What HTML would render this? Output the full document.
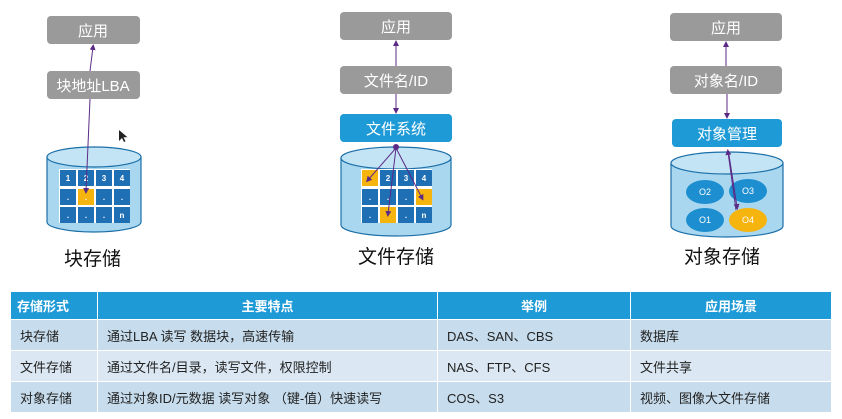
<!DOCTYPE html>
<html><head><meta charset="utf-8"><style>
body{margin:0;width:842px;height:419px;background:#fff;overflow:hidden;position:relative;font-family:"Liberation Sans","Noto Sans CJK SC",sans-serif}
svg{position:absolute;left:0;top:0}
table{position:absolute;left:10px;top:291px;width:822px;border-collapse:collapse;font-size:13px;color:#222;table-layout:fixed}
td,th{border:1px solid #fff;padding:0 0 0 9px;text-align:left}
th{background:#1e9ad6;color:#fff;height:27px;font-weight:bold;text-align:center;padding:0}
th:first-child{text-align:left;padding-left:6px}
tr.a td{background:#c7dcec;height:30px}
tr.b td{background:#dbe8f3;height:30px}
</style></head><body>
<svg width="842" height="290" font-family="Liberation Sans,Noto Sans CJK SC,sans-serif">
<defs><marker id="ar" markerWidth="6" markerHeight="6" refX="3" refY="3" orient="auto"><path d="M0,0L6,3L0,6z" fill="#5b2a86"/></marker></defs>
<g font-size="15" fill="#fff" text-anchor="middle">
<rect x="47" y="16" width="93" height="28" rx="4" fill="#9a9a9a"/><text x="93" y="36">应用</text>
<rect x="47" y="71" width="93" height="28" rx="4" fill="#9a9a9a"/><text x="93" y="91">块地址LBA</text>
<rect x="340" y="12" width="112" height="28" rx="4" fill="#9a9a9a"/><text x="396" y="32">应用</text>
<rect x="340" y="66" width="112" height="28" rx="4" fill="#9a9a9a"/><text x="396" y="86">文件名/ID</text>
<rect x="340" y="114" width="112" height="28" rx="4" fill="#1e9ad6"/><text x="396" y="134">文件系统</text>
<rect x="670" y="13" width="112" height="28" rx="4" fill="#9a9a9a"/><text x="726" y="33">应用</text>
<rect x="670" y="66" width="112" height="28" rx="4" fill="#9a9a9a"/><text x="726" y="86">对象名/ID</text>
<rect x="672" y="119" width="110" height="28" rx="4" fill="#1e9ad6"/><text x="727" y="139">对象管理</text>
</g>
<g stroke="#1b6fa8" stroke-width="1.2">
<path d="M47,157V222A47,10 0 0 0 141,222V157" fill="#a9d7ef"/><ellipse cx="94" cy="157" rx="47" ry="10" fill="#c3e4f5"/>
<path d="M341,158V225A55,11 0 0 0 451,225V158" fill="#a9d7ef"/><ellipse cx="396" cy="158" rx="55" ry="11" fill="#c3e4f5"/>
<path d="M671,163V226A56,11 0 0 0 783,226V163" fill="#a9d7ef"/><ellipse cx="727" cy="163" rx="56" ry="11" fill="#c3e4f5"/>
</g>
<g font-size="8" font-weight="bold" fill="#fff" text-anchor="middle">
<rect x="59" y="169" width="71" height="54" fill="#fff"/>
<rect x="60" y="170" width="16" height="16" fill="#1f6fb5"/><text x="68" y="181">1</text>
<rect x="78" y="170" width="16" height="16" fill="#1f6fb5"/><text x="86" y="181">2</text>
<rect x="96" y="170" width="16" height="16" fill="#1f6fb5"/><text x="104" y="181">3</text>
<rect x="114" y="170" width="16" height="16" fill="#1f6fb5"/><text x="122" y="181">4</text>
<rect x="60" y="189" width="16" height="16" fill="#1f6fb5"/><rect x="78" y="189" width="16" height="16" fill="#f6b40e"/><rect x="96" y="189" width="16" height="16" fill="#1f6fb5"/><rect x="114" y="189" width="16" height="16" fill="#1f6fb5"/>
<rect x="60" y="207" width="16" height="16" fill="#1f6fb5"/><rect x="78" y="207" width="16" height="16" fill="#1f6fb5"/><rect x="96" y="207" width="16" height="16" fill="#1f6fb5"/><rect x="114" y="207" width="16" height="16" fill="#1f6fb5"/><text x="122" y="218">n</text>
<text x="68" y="200">.</text><text x="86" y="200">.</text><text x="104" y="200">.</text><text x="122" y="200">.</text><text x="68" y="218">.</text><text x="86" y="218">.</text><text x="104" y="218">.</text>
<rect x="361" y="169" width="71" height="54" fill="#fff"/>
<rect x="362" y="170" width="16" height="16" fill="#f6b40e"/>
<rect x="380" y="170" width="16" height="16" fill="#1f6fb5"/><text x="388" y="181">2</text>
<rect x="398" y="170" width="16" height="16" fill="#1f6fb5"/><text x="406" y="181">3</text>
<rect x="416" y="170" width="16" height="16" fill="#1f6fb5"/><text x="424" y="181">4</text>
<rect x="362" y="189" width="16" height="16" fill="#1f6fb5"/><rect x="380" y="189" width="16" height="16" fill="#1f6fb5"/><rect x="398" y="189" width="16" height="16" fill="#1f6fb5"/><rect x="416" y="189" width="16" height="16" fill="#f6b40e"/>
<rect x="362" y="207" width="16" height="16" fill="#1f6fb5"/><rect x="380" y="207" width="16" height="16" fill="#f6b40e"/><rect x="398" y="207" width="16" height="16" fill="#1f6fb5"/><rect x="416" y="207" width="16" height="16" fill="#1f6fb5"/><text x="424" y="218">n</text>
<text x="370" y="200">.</text><text x="388" y="200">.</text><text x="406" y="200">.</text><text x="370" y="218">.</text><text x="406" y="218">.</text>
</g>
<g font-size="9" fill="#fff" text-anchor="middle">
<ellipse cx="705" cy="192" rx="19" ry="12" fill="#1d8fd0"/><text x="705" y="195">O2</text>
<ellipse cx="748" cy="191" rx="19" ry="12" fill="#1d8fd0"/><text x="748" y="194">O3</text>
<ellipse cx="705" cy="220" rx="19" ry="12" fill="#1d8fd0"/><text x="705" y="223">O1</text>
<ellipse cx="748" cy="220" rx="19" ry="12" fill="#f6b40e"/><text x="748" y="223">O4</text>
</g>
<g stroke="#5b2a86" stroke-width="1" fill="none">
<line x1="90" y1="71" x2="93" y2="47" marker-end="url(#ar)"/>
<line x1="90" y1="99" x2="86" y2="191" marker-end="url(#ar)"/>
<line x1="396" y1="66" x2="396" y2="43" marker-end="url(#ar)"/>
<line x1="396" y1="94" x2="396" y2="111" marker-end="url(#ar)"/>
<line x1="396" y1="148" x2="368" y2="180" marker-end="url(#ar)"/>
<line x1="396" y1="148" x2="388" y2="214" marker-end="url(#ar)"/>
<line x1="396" y1="148" x2="422" y2="198" marker-end="url(#ar)"/>
<line x1="726" y1="66" x2="726" y2="44" marker-end="url(#ar)"/>
<line x1="727" y1="94" x2="727" y2="116" marker-end="url(#ar)"/>
<line x1="736" y1="210" x2="728" y2="152" marker-end="url(#ar)"/>
<line x1="729" y1="155" x2="737" y2="207" marker-end="url(#ar)"/>
</g>
<circle cx="396" cy="147" r="3" fill="#5b2a86"/>
<g font-size="19" fill="#111">
<text x="64" y="265">块存储</text>
<text x="358" y="263">文件存储</text>
<text x="684" y="263">对象存储</text>
</g>
<path d="M119,130l0,11l3,-3l2,4l1.5,-.8l-2,-4l4,0z" fill="#222"/>
</svg>
<table>
<colgroup><col style="width:87px"><col style="width:340px"><col style="width:193px"><col></colgroup>
<tr><th>存储形式</th><th>主要特点</th><th>举例</th><th>应用场景</th></tr>
<tr class="a"><td>块存储</td><td>通过LBA 读写 数据块，高速传输</td><td>DAS、SAN、CBS</td><td>数据库</td></tr>
<tr class="b"><td>文件存储</td><td>通过文件名/目录，读写文件，权限控制</td><td>NAS、FTP、CFS</td><td>文件共享</td></tr>
<tr class="a"><td>对象存储</td><td>通过对象ID/元数据 读写对象 （键-值）快速读写</td><td>COS、S3</td><td>视频、图像大文件存储</td></tr>
</table>
</body></html>
